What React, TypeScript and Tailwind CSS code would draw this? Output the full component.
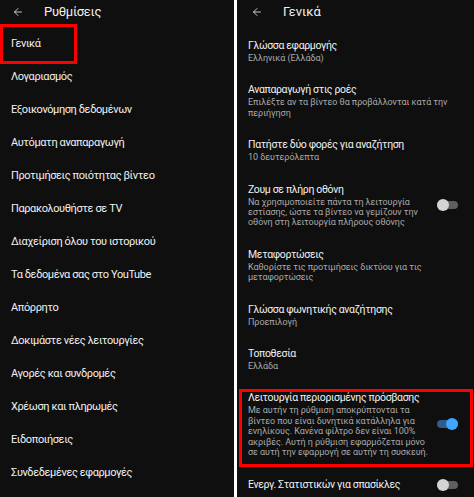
import { ArrowLeft } from "lucide-react";

const menu = [
  "Γενικά",
  "Λογαριασμός",
  "Εξοικονόμηση δεδομένων",
  "Αυτόματη αναπαραγωγή",
  "Προτιμήσεις ποιότητας βίντεο",
  "Παρακολουθήστε σε TV",
  "Διαχείριση όλου του ιστορικού",
  "Τα δεδομένα σας στο YouTube",
  "Απόρρητο",
  "Δοκιμάστε νέες λειτουργίες",
  "Αγορές και συνδρομές",
  "Χρέωση και πληρωμές",
  "Ειδοποιήσεις",
  "Συνδεδεμένες εφαρμογές",
];

type Setting = {
  title: string;
  lines: string[];
  toggle?: "on" | "off";
  marked?: boolean;
};

const settings: Setting[] = [
  { title: "Γλώσσα εφαρμογής", lines: ["Ελληνικά (Ελλάδα)"] },
  {
    title: "Αναπαραγωγή στις ροές",
    lines: ["Επιλέξτε αν τα βίντεο θα προβάλλονται κατά την", "περιήγηση"],
  },
  { title: "Πατήστε δύο φορές για αναζήτηση", lines: ["10 δευτερόλεπτα"] },
  {
    title: "Ζουμ σε πλήρη οθόνη",
    lines: [
      "Να χρησιμοποιείτε πάντα τη λειτουργία",
      "εστίασης, ώστε τα βίντεο να γεμίζουν την",
      "οθόνη στη λειτουργία πλήρους οθόνης",
    ],
    toggle: "off",
  },
  {
    title: "Μεταφορτώσεις",
    lines: ["Καθορίστε τις προτιμήσεις δικτύου για τις", "μεταφορτώσεις"],
  },
  { title: "Γλώσσα φωνητικής αναζήτησης", lines: ["Προεπιλογή"] },
  { title: "Τοποθεσία", lines: ["Ελλάδα"] },
  {
    title: "Λειτουργία περιορισμένης πρόσβασης",
    lines: [
      "Με αυτήν τη ρύθμιση αποκρύπτονται τα",
      "βίντεο που είναι δυνητικά κατάλληλα για",
      "ενηλίκους. Κανένα φίλτρο δεν είναι 100%",
      "ακριβές. Αυτή η ρύθμιση εφαρμόζεται μόνο",
      "σε αυτή την εφαρμογή σε αυτήν τη συσκευή.",
    ],
    toggle: "on",
    marked: true,
  },
  { title: "Ενεργ. Στατιστικών για σπασίκλες", lines: [], toggle: "off" },
];

function Toggle({ on }: { on: boolean }) {
  return (
    <div className="relative w-[21px] h-[12px] flex items-center shrink-0">
      <div
        className={`w-full h-[8px] rounded-full ${on ? "bg-[#2d5d8c]" : "bg-[#5f5f5f]"}`}
      />
      <div
        className={`absolute top-0 w-[12px] h-[12px] rounded-full ${
          on ? "right-0 bg-[#3ea6ff]" : "left-0 bg-[#d4d4d4]"
        }`}
      />
    </div>
  );
}

export default function App() {
  return (
    <div
      className="w-[474px] h-[497px] flex bg-white overflow-hidden"
      style={{ fontFamily: "Roboto, 'Noto Sans', sans-serif" }}
    >
      {/* Left: settings menu */}
      <div className="w-[234px] h-full bg-[#0f0f0f] text-[#f1f1f1] overflow-hidden">
        <div className="h-[28px] flex items-center pb-[4px]">
          <ArrowLeft className="ml-[12px] w-[12px] h-[12px] text-[#f1f1f1]" strokeWidth={1.6} />
          <span className="ml-[20px] text-[13px] tracking-[-0.3px]">Ρυθμίσεις</span>
        </div>
        {menu.map((item, i) => (
          <div
            key={item}
            className="relative h-[33px] flex items-center pl-[11px] text-[11px] tracking-[-0.4px]"
          >
            {item}
            {i === 0 && (
              <div className="absolute -top-[4px] -bottom-[3px] left-0 w-[77px] border-[3px] border-[#ff0000]" />
            )}
          </div>
        ))}
      </div>

      {/* Divider */}
      <div className="w-[3px] h-full bg-white" />

      {/* Right: general settings */}
      <div className="flex-1 h-full bg-[#0f0f0f] text-[#f1f1f1] overflow-hidden">
        <div className="h-[29px] flex items-center pb-[5px]">
          <ArrowLeft className="ml-[14px] w-[12px] h-[12px] text-[#f1f1f1]" strokeWidth={1.6} />
          <span className="ml-[20px] text-[13px]">Γενικά</span>
        </div>
        {settings.map((s) => (
          <div
            key={s.title}
            className="relative flex items-center justify-between gap-2 pl-[11px] pr-[16px] py-[10px]"
          >
            <div className="min-w-0">
              <div className="text-[10.5px] leading-[14px] tracking-[-0.35px] whitespace-nowrap">
                {s.title}
              </div>
              {s.lines.map((l) => (
                <div
                  key={l}
                  className="text-[9px] leading-[10.4px] tracking-[-0.05px] text-[#aaaaaa] whitespace-nowrap"
                >
                  {l}
                </div>
              ))}
            </div>
            {s.toggle && <Toggle on={s.toggle === "on"} />}
            {s.marked && (
              <div className="absolute top-[8px] bottom-[1px] left-[2px] right-[1px] border-[3px] border-[#ff0000]" />
            )}
          </div>
        ))}
      </div>
    </div>
  );
}
